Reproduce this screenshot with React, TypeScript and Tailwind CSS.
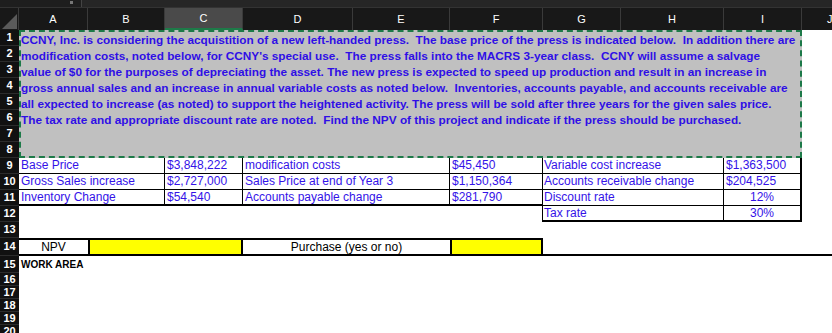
import React from "react";

const font = { fontFamily: '"Liberation Sans", Arial, sans-serif' };

const headers = [
  { label: "A", w: "w-[69px]" },
  { label: "B", w: "w-[77px]" },
  { label: "C", w: "w-[78px]", active: true },
  { label: "D", w: "w-[110px]" },
  { label: "E", w: "w-[97px]" },
  { label: "F", w: "w-[93px]" },
  { label: "G", w: "w-[78px]" },
  { label: "H", w: "w-[103px]" },
  { label: "I", w: "w-[78px]" },
];

const intro = [
  "CCNY, Inc. is considering the acquistition of a new left-handed press.  The base price of the press is indicated below.  In addition there are",
  "modification costs, noted below, for CCNY's special use.  The press falls into the MACRS 3-year class.  CCNY will assume a salvage",
  "value of $0 for the purposes of depreciating the asset. The new press is expected to speed up production and result in an increase in",
  "gross annual sales and an increase in annual variable costs as noted below.  Inventories, accounts payable, and accounts receivable are",
  "all expected to increase (as noted) to support the heightened activity. The press will be sold after three years for the given sales price.",
  "The tax rate and appropriate discount rate are noted.  Find the NPV of this project and indicate if the press should be purchased.",
];

const inputs = [
  ["Base Price", "$3,848,222", "modification costs", "$45,450", "Variable cost increase", "$1,363,500"],
  ["Gross Sales increase", "$2,727,000", "Sales Price at end of Year 3", "$1,150,364", "Accounts receivable change", "$204,525"],
  ["Inventory Change", "$54,540", "Accounts payable change", "$281,790", "Discount rate", "12%"],
];

const RowNum = ({ n, h = "h-[16px]" }: { n: number; h?: string }) => (
  <div
    className={`w-[19px] ${h} shrink-0 bg-[#111111] border-b border-[#2c2c2c] text-white text-[11px] font-bold flex items-center justify-center leading-none`}
  >
    {n}
  </div>
);

export default function App() {
  return (
    <div className="w-[832px] h-[333px] overflow-hidden bg-white text-black" style={font}>
      {/* formula bar remnant */}
      <div className="h-[8px] flex bg-[#1e1e1e] border-b border-[#333]">
        <div className="w-[82px] border-r border-[#444] relative">
          <div className="absolute right-[8px] top-[1px] w-[3px] h-[3px] bg-[#777]" />
        </div>
        <div className="flex-1 bg-[#262626]" />
      </div>

      {/* column headers */}
      <div className="h-[22px] flex bg-[#181818] text-white text-[11px]">
        <div className="w-[19px] shrink-0 relative border-r border-[#3a3a3a]">
          <svg className="absolute right-[1px] bottom-[1px]" width="15" height="15" viewBox="0 0 15 15">
            <polygon points="15,0 15,15 0,15" fill="#5a5a5a" />
          </svg>
        </div>
        {headers.map((h) => (
          <div
            key={h.label}
            className={`${h.w} shrink-0 flex items-center justify-center border-r border-[#3a3a3a] ${
              h.active ? "bg-[#4a4a4a] border-b-2 border-b-[#1d7a48]" : ""
            }`}
          >
            {h.label}
          </div>
        ))}
        <div className="flex-1 flex items-center pl-[25px]">J</div>
      </div>

      {/* rows 1-8: problem statement */}
      <div className="flex">
        <div className="flex flex-col">
          {[1, 2, 3, 4, 5, 6, 7, 8].map((n) => (
            <RowNum key={n} n={n} />
          ))}
        </div>
        <div className="w-[783px] h-[128px] shrink-0 bg-[#c0c0c0] border-2 border-dashed border-[#1d7a48] text-[#2f0fe6] font-bold text-[11.8px] leading-[16px] whitespace-pre">
          {intro.map((line, i) => (
            <div key={i} className="h-[16px]">
              {line}
            </div>
          ))}
        </div>
        <div className="flex-1" />
      </div>

      {/* rows 9-11: inputs */}
      {inputs.map((r, i) => {
        const last = i === inputs.length - 1;
        const bb = last ? "border-b-2" : "border-b";
        return (
          <div key={i} className="flex h-[16px] text-[12px] leading-[15px] text-[#3412e8]">
            <RowNum n={9 + i} />
            <div className={`w-[146px] shrink-0 pl-[2px] border-r border-black ${bb} border-b-black`}>{r[0]}</div>
            <div className={`w-[78px] shrink-0 pl-[2px] border-r border-black ${bb} border-b-black`}>{r[1]}</div>
            <div className={`w-[207px] shrink-0 pl-[2px] border-r border-black ${bb} border-b-black`}>{r[2]}</div>
            <div className={`w-[93px] shrink-0 pl-[2px] border-r border-black ${bb} border-b-black`}>{r[3]}</div>
            <div className="w-[181px] shrink-0 pl-[1px] border-r border-b border-black">{r[4]}</div>
            <div
              className={`w-[78px] shrink-0 border-r-2 border-b border-black ${
                r[5].endsWith("%") ? "text-center" : "pl-[2px]"
              }`}
            >
              {r[5]}
            </div>
            <div className="flex-1" />
          </div>
        );
      })}

      {/* row 12 */}
      <div className="flex h-[16px] text-[12px] leading-[15px] text-[#3412e8]">
        <RowNum n={12} />
        <div className="w-[524px] shrink-0 border-r border-black" />
        <div className="w-[181px] shrink-0 pl-[1px] border-r border-b-2 border-black">Tax rate</div>
        <div className="w-[78px] shrink-0 text-center border-r-2 border-b-2 border-black">30%</div>
        <div className="flex-1" />
      </div>

      {/* row 13 */}
      <div className="flex h-[16px]">
        <RowNum n={13} />
        <div className="flex-1" />
      </div>

      {/* row 14: answers */}
      <div className="flex h-[18px] text-[12px] leading-[14px]">
        <RowNum n={14} h="h-[18px]" />
        <div className="flex-1 flex border-b-2 border-black">
          <div className="w-[69px] shrink-0 text-center border-t-2 border-black">NPV</div>
          <div className="w-[155px] shrink-0 bg-[#ffff00] border-2 border-b-0 border-black" />
          <div className="w-[207px] shrink-0 text-center border-t-2 border-black">Purchase (yes or no)</div>
          <div className="w-[93px] shrink-0 bg-[#ffff00] border-2 border-b-0 border-black" />
        </div>
      </div>

      {/* row 15+: work area */}
      <div className="flex h-[17px]">
        <RowNum n={15} h="h-[17px]" />
        <div className="pl-[2px] pt-[2px] text-[10px] font-bold leading-[13px]">WORK AREA</div>
      </div>
      {[16, 17, 18, 19, 20].map((n) => (
        <div key={n} className="flex h-[13px]">
          <RowNum n={n} h="h-[13px]" />
          <div className="flex-1" />
        </div>
      ))}
    </div>
  );
}
